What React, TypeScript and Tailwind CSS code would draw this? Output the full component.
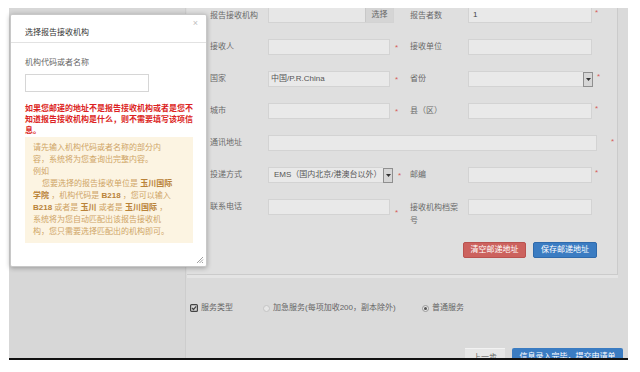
import React from "react";

const FONT = "font-['Liberation_Sans','Noto_Sans_CJK_SC',sans-serif]";

function Star({ cls = "" }: { cls?: string }) {
  return <span className={`text-[#d65c5c] text-[8px] leading-none ${cls}`}>*</span>;
}

function Arrow() {
  return (
    <div className="w-[10px] h-[15px] bg-[#d6d6d6] border border-[#8f8f8f] flex items-center justify-center shrink-0">
      <svg width="5" height="3" viewBox="0 0 5 3">
        <polygon points="0,0 5,0 2.5,3" fill="#333" />
      </svg>
    </div>
  );
}

const inputCls = "h-[16px] bg-[#e9e9e9] border border-[#d3d3d3] flex items-center text-[8px] text-[#555] shrink-0";
const labelCls = "text-[8px] text-[#6a6a6a] leading-[16px] shrink-0";
const bold = "text-[#b98238]";

export default function App() {
  return (
    <div className={`w-[640px] h-[372px] bg-white relative overflow-hidden ${FONT}`}>
      <div className="pt-[8px] pl-[9px]">
        <div className="w-[619px] h-[352px] border-b-[2px] border-[#111] flex">
          {/* sidebar */}
          <div className="w-[176px] h-full bg-[#d7d7d7] shrink-0" />
          {/* main */}
          <div className="flex-1 h-full bg-[#dadada] border-l border-[#cdcdcd] flex flex-col overflow-hidden">
            {/* panel */}
            <div className="shrink-0 ml-[1px] w-[431px] h-[267px] bg-[#dfdfdf] border-r border-b border-[#cbcbcb] pl-[23px] flex flex-col">
              {/* row 1 */}
              <div className="flex items-center h-[15px] shrink-0">
                <div className={`w-[58px] ${labelCls}`}>报告接收机构</div>
                <div className="w-[126px] h-[15px] bg-[#e7e7e7] border border-[#d3d3d3] border-t-0 flex justify-end">
                  <div className="w-[28px] h-full bg-[#d5d5d5] border-l border-[#c8c8c8] text-[8px] text-[#666] flex items-center justify-center">选择</div>
                </div>
                <div className="w-[16px]" />
                <div className={`w-[58px] ${labelCls}`}>报告者数</div>
                <div className="w-[124px] h-[15px] bg-[#e9e9e9] border border-[#d3d3d3] border-t-0 flex items-center text-[8px] text-[#444] pl-[4px]">1</div>
                <Star cls="ml-[3px] -mt-[5px]" />
              </div>
              {/* row 2 */}
              <div className="flex items-center h-[16px] mt-[16px] shrink-0">
                <div className={`w-[58px] ${labelCls}`}>接收人</div>
                <div className={`w-[122px] ${inputCls}`} />
                <div className="w-[20px] pl-[5px] -mt-[5px]"><Star /></div>
                <div className={`w-[58px] ${labelCls}`}>接收单位</div>
                <div className={`w-[124px] ${inputCls}`} />
              </div>
              {/* row 3 */}
              <div className="flex items-center h-[16px] mt-[16px] shrink-0">
                <div className={`w-[58px] ${labelCls}`}>国家</div>
                <div className={`w-[122px] ${inputCls} pl-[2px] text-[#444]`}>中国/P.R.China</div>
                <div className="w-[20px] pl-[5px] -mt-[5px]"><Star /></div>
                <div className={`w-[58px] ${labelCls}`}>省份</div>
                <div className={`w-[115px] ${inputCls} border-r-0`} />
                <Arrow />
                <Star cls="ml-[4px] -mt-[5px]" />
              </div>
              {/* row 4 */}
              <div className="flex items-center h-[16px] mt-[16px] shrink-0">
                <div className={`w-[58px] ${labelCls}`}>城市</div>
                <div className={`w-[122px] ${inputCls}`} />
                <div className="w-[20px] pl-[5px] -mt-[5px]"><Star /></div>
                <div className={`w-[58px] ${labelCls}`}>县（区）</div>
                <div className={`w-[124px] ${inputCls}`} />
                <Star cls="ml-[3px] -mt-[5px]" />
              </div>
              {/* row 5 */}
              <div className="flex items-center h-[16px] mt-[16px] shrink-0">
                <div className={`w-[58px] ${labelCls}`}>通讯地址</div>
                <div className={`w-[329px] ${inputCls}`} />
                <Star cls="ml-[14px] -mt-[3px]" />
              </div>
              {/* row 6 */}
              <div className="flex items-center h-[16px] mt-[16px] shrink-0">
                <div className={`w-[58px] ${labelCls}`}>投递方式</div>
                <div className={`w-[115px] ${inputCls} border-r-0 pl-[5px] text-[#444] whitespace-nowrap`}>EMS（国内北京/港澳台以外）</div>
                <Arrow />
                <div className="w-[17px] pl-[5px] -mt-[5px]"><Star /></div>
                <div className={`w-[58px] ${labelCls}`}>邮编</div>
                <div className={`w-[124px] ${inputCls}`} />
                <Star cls="ml-[3px] -mt-[5px]" />
              </div>
              {/* row 7 */}
              <div className="flex items-start h-[16px] mt-[16px] shrink-0">
                <div className={`w-[58px] ${labelCls}`}>联系电话</div>
                <div className={`w-[122px] ${inputCls}`} />
                <div className="w-[20px] pl-[5px] -mt-[1px]"><Star /></div>
                <div className="w-[52px] mr-[6px] text-[8px] text-[#6a6a6a] leading-[13px] mt-[2px]">接收机构档案号</div>
                <div className={`w-[124px] ${inputCls}`} />
              </div>
              {/* buttons */}
              <div className="flex mt-[27px] ml-[253px] gap-[7px] shrink-0">
                <div className="w-[63px] h-[16px] bg-[#cc625e] border border-[#b9524f] rounded-[2px] text-white text-[8px] flex items-center justify-center">清空邮递地址</div>
                <div className="w-[64px] h-[16px] bg-[#3b7cc2] border border-[#2f6aab] rounded-[2px] text-white text-[8px] flex items-center justify-center">保存邮递地址</div>
              </div>
            </div>
            <div className="shrink-0 ml-[1px] w-[431px] h-[3px] bg-[#e4e4e4]" />
            {/* service type */}
            <div className="shrink-0 flex items-center h-[12px] mt-[24px] text-[8px] text-[#666]">
              <svg className="ml-[4px]" width="8" height="8" viewBox="0 0 8 8">
                <rect x="0.6" y="0.6" width="6.8" height="6.8" rx="1" fill="none" stroke="#444" strokeWidth="1.2" />
                <polyline points="2,4 3.5,5.5 6.2,2.4" fill="none" stroke="#444" strokeWidth="1.2" />
              </svg>
              <span className="ml-[3px] w-[62px]">服务类型</span>
              <div className="w-[7px] h-[7px] rounded-full border border-[#c4c4c4] bg-[#e6e6e6]" />
              <span className="ml-[3px] w-[149px] whitespace-nowrap">加急服务(每项加收200，副本除外)</span>
              <div className="w-[7px] h-[7px] rounded-full border border-[#999] bg-[#e6e6e6] flex items-center justify-center">
                <div className="w-[3px] h-[3px] rounded-full bg-[#555]" />
              </div>
              <span className="ml-[3px]">普通服务</span>
            </div>
            {/* bottom buttons */}
            <div className="shrink-0 flex mt-[34px] ml-[279px] gap-[7px]">
              <div className="w-[40px] h-[18px] bg-[#e6e6e6] border-t border-[#f2f2f2] text-[8px] text-[#666] flex items-center justify-center">上一步</div>
              <div className="w-[111px] h-[18px] bg-[#3b7cc2] rounded-[2px] text-[8px] text-white flex items-center justify-center whitespace-nowrap">信息录入完毕，提交申请单</div>
            </div>
          </div>
        </div>
      </div>

      {/* modal */}
      <div className="absolute left-[10px] top-[14px] w-[197px] h-[253px] bg-white border border-[#c8c8c8] rounded-[2px] shadow-[0_1px_5px_rgba(0,0,0,0.3)]">
        <div className="relative h-[28px] border-b border-[#e2e2e2] pl-[14px] pt-[13px] text-[8px] leading-[10px] text-[#333]">
          选择报告接收机构
          <span className="absolute right-[8px] top-[3px] text-[9px] text-[#c0c0c0]">×</span>
        </div>
        <div className="pl-[14px]">
          <div className="mt-[15px] text-[8px] leading-[10px] text-[#666]">机构代码或者名称</div>
          <div className="mt-[6px] w-[124px] h-[18px] border border-[#d6d6d6] bg-white" />
          <div className="mt-[11px] text-[8px] leading-[11px] font-bold text-[#dc1f24] whitespace-nowrap">
            <div>如果您邮递的地址不是报告接收机构或者是您不</div>
            <div>知道报告接收机构是什么，则不需要填写该项信</div>
            <div>息。</div>
          </div>
          <div className="mt-[1px] w-[168px] h-[106px] bg-[#fcf4e2] pl-[8px] pt-[5px] text-[8px] leading-[12px] text-[#cfa466] whitespace-nowrap">
            <div>请先输入机构代码或者名称的部分内</div>
            <div>容，系统将为您查询出完整内容。</div>
            <div>例如</div>
            <div className="pl-[9px]">您要选择的报告接收单位是 <b className={bold}>玉川国际</b></div>
            <div><b className={bold}>学院</b> ，机构代码是 <b className={bold}>B218</b> ，您可以输入</div>
            <div><b className={bold}>B218</b> 或者是 <b className={bold}>玉川</b> 或者是 <b className={bold}>玉川国际</b> ，</div>
            <div>系统将为您自动匹配出该报告接收机</div>
            <div>构，您只需要选择匹配出的机构即可。</div>
          </div>
        </div>
        <svg className="absolute right-[2px] bottom-[2px]" width="8" height="8" viewBox="0 0 8 8">
          <line x1="7" y1="1" x2="1" y2="7" stroke="#888" strokeWidth="0.8" />
          <line x1="7" y1="3.5" x2="3.5" y2="7" stroke="#888" strokeWidth="0.8" />
          <line x1="7" y1="6" x2="6" y2="7" stroke="#888" strokeWidth="0.8" />
        </svg>
      </div>
    </div>
  );
}
